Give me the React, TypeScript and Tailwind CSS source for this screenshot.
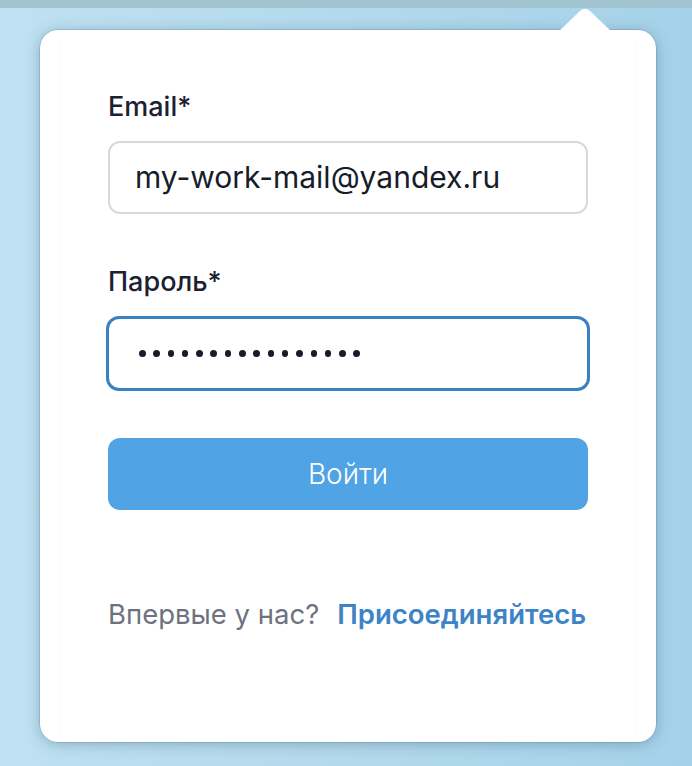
import React from "react";

export default function App() {
  const dots = Array.from({ length: 16 });
  return (
    <div
      className="relative w-[692px] h-[766px] overflow-hidden"
      style={{ fontFamily: "Inter, 'Noto Sans', 'Liberation Sans', sans-serif" }}
    >
      <div className="absolute inset-0 bg-gradient-to-r from-[#bfe1f1] via-[#b3d9ec] to-[#a5d2e9]" />
      <div className="absolute left-0 right-0 top-0 h-[8px] bg-[#a2c4d1]" />
      <div className="relative pt-[30px] pl-[40px]">
        <div className="relative w-[616px] h-[712px] bg-white rounded-[18px] shadow-[0_2px_14px_rgba(40,80,110,0.35),0_0_0_0.5px_rgba(60,90,110,0.35)]">
          <svg
            className="absolute left-[518px] top-[-22px]"
            width="54"
            height="24"
            viewBox="0 0 54 24"
          >
            <path d="M0 24 L22 3 Q27 -1.5 32 3 L54 24 Z" fill="#ffffff" />
          </svg>
          <div className="absolute left-[20px] right-[19px] top-[10px] bottom-[10px] border-x border-[#f8f8f8] pointer-events-none" />
          <div className="relative px-[68px] pt-[60px] flex flex-col">
            <label className="text-[27px] leading-[33px] font-medium text-[#1b2130]">Email*</label>
            <div className="mt-[18px] h-[73px] rounded-[12px] border-2 border-[#d5d8de] flex items-center pl-[25px] text-[30px] text-[#161c2a]">
              my-work-mail@yandex.ru
            </div>
            <label className="mt-[51px] text-[27px] leading-[33px] font-medium text-[#1b2130]">Пароль*</label>
            <div className="mt-[18px] -mx-[2px] h-[75px] rounded-[13px] border-[3px] border-[#3b80c3] flex items-center pl-[30px] gap-[7.8px]">
              {dots.map((_, i) => (
                <span key={i} className="block w-[6.5px] h-[6.5px] rounded-full bg-[#161c2a]" />
              ))}
            </div>
            <button className="mt-[47px] h-[72px] rounded-[12px] bg-[#50a3e5] text-white text-[28px] font-light flex items-center justify-center">
              Войти
            </button>
            <div className="mt-[87px] flex items-center text-[27.5px] leading-[34px]">
              <span className="text-[#6e7280]">Впервые у нас?</span>
              <span className="ml-[18px] font-semibold text-[#3d84c6]">Присоединяйтесь</span>
            </div>
          </div>
        </div>
      </div>
    </div>
  );
}
